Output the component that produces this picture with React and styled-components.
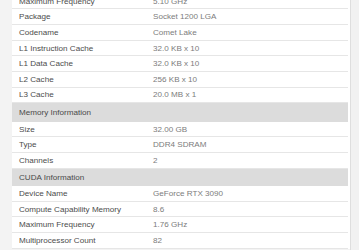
import React from "react"
import styled, { createGlobalStyle } from "styled-components"

const GlobalStyle = createGlobalStyle`
  html, body {
    margin: 0;
    padding: 0;
    background: #f3f3f3;
    overflow: hidden;
  }
`

const Page = styled.div`
  display: flex;
  height: 250px;
  overflow: hidden;
  font-family: "Liberation Sans", Arial, sans-serif;
`

const Content = styled.div`
  flex: 1;
  padding-left: 12px;
`

const Scrollbar = styled.div`
  width: 8px;
  border-left: 1px solid #dedede;
  background: #f1f1f1;
`

const Table = styled.div`
  margin-top: -6.3px;
  background: #fff;
  border-right: 2px solid #fff;
`

const Row = styled.div`
  display: grid;
  grid-template-columns: 141px 1fr;
  align-items: center;
  height: 15.67px;
  box-sizing: border-box;
  border-bottom: 1px solid #e6e6e6;
  font-size: 8.1px;
`

const Label = styled.div`
  padding-left: 7px;
  color: #4c4c4c;
`

const Value = styled.div`
  color: #7c7c7c;
`

const Section = styled.div`
  display: flex;
  align-items: center;
  height: ${p => p.h}px;
  padding-left: 7px;
  background: #dcdcdc;
  color: #4a4a4a;
  font-size: 8.1px;
`

const sections = [
  {
    rows: [
      ["Maximum Frequency", "5.10 GHz"],
      ["Package", "Socket 1200 LGA"],
      ["Codename", "Comet Lake"],
      ["L1 Instruction Cache", "32.0 KB x 10"],
      ["L1 Data Cache", "32.0 KB x 10"],
      ["L2 Cache", "256 KB x 10"],
      ["L3 Cache", "20.0 MB x 1"],
    ],
  },
  {
    title: "Memory Information",
    h: 18.4,
    rows: [
      ["Size", "32.00 GB"],
      ["Type", "DDR4 SDRAM"],
      ["Channels", "2"],
    ],
  },
  {
    title: "CUDA Information",
    h: 17.5,
    rows: [
      ["Device Name", "GeForce RTX 3090"],
      ["Compute Capability Memory", "8.6"],
      ["Maximum Frequency", "1.76 GHz"],
      ["Multiprocessor Count", "82"],
    ],
  },
]

export default function App() {
  return (
    <Page>
      <GlobalStyle />
      <Content>
        <Table>
          {sections.map((s, i) => (
            <React.Fragment key={i}>
              {s.title && <Section h={s.h}>{s.title}</Section>}
              {s.rows.map(([k, v]) => (
                <Row key={k}>
                  <Label>{k}</Label>
                  <Value>{v}</Value>
                </Row>
              ))}
            </React.Fragment>
          ))}
        </Table>
      </Content>
      <Scrollbar />
    </Page>
  )
}
